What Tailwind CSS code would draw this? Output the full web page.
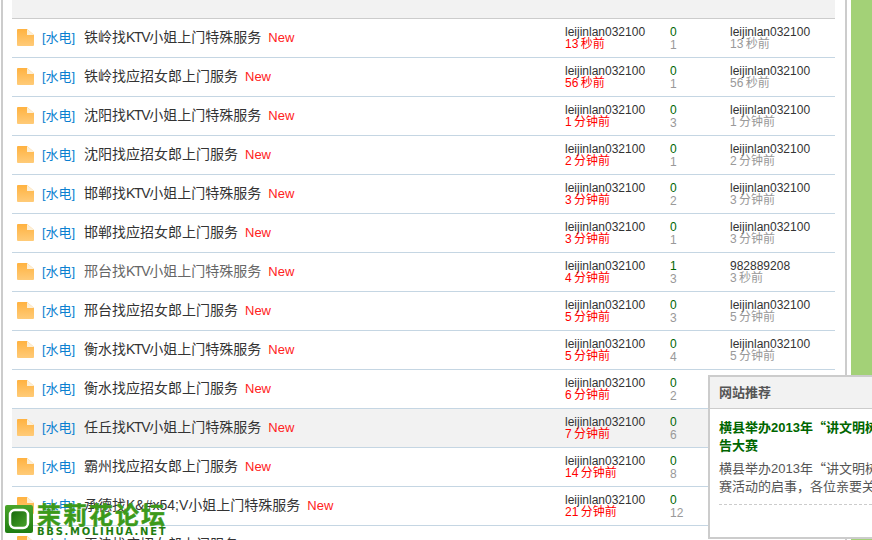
<!DOCTYPE html>
<html lang="en">
<head>
  <meta charset="UTF-8" />
  <title>茉莉花论坛</title>
  <script src="https://cdn.jsdelivr.net/npm/@tailwindcss/browser@4"></script>
</head>
<body class="relative h-[540px] w-[872px] overflow-hidden bg-white font-['Liberation_Sans','Noto_Sans_CJK_SC',sans-serif] text-xs text-[#333]">

  <div class="flex h-[540px]">
    <div class="ml-[1px] h-full w-[11px] border-l-2 border-[#ccc]"></div>

    <div class="w-[823px]">
      <div class="h-[19px] border-b border-[#ccc] bg-[#f2f2f2]"></div>
      <div id="rows"></div>
    </div>

    <div class="ml-[10px] h-full w-[6px] border-l-2 border-[#ccc]"></div>
    <div class="h-full w-[21px] bg-[#a3d177]"></div>
  </div>

  <!-- site logo watermark -->
  <div class="absolute left-[5px] top-[505px] flex items-start gap-[4px]">
    <svg width="28" height="28" viewBox="0 0 28 28">
      <defs>
        <linearGradient id="logoBg" x1="0" y1="0" x2="0" y2="1">
          <stop offset="0" stop-color="#4aa52a" />
          <stop offset="1" stop-color="#1f7d12" />
        </linearGradient>
        <linearGradient id="logoInner" x1="0" y1="0" x2="1" y2="1">
          <stop offset="0" stop-color="#15660c" />
          <stop offset="1" stop-color="#4aa52a" />
        </linearGradient>
      </defs>
      <rect width="28" height="28" rx="2" fill="url(#logoBg)" />
      <rect x="5" y="5" width="18" height="18" rx="5" fill="url(#logoInner)" stroke="#fff" stroke-width="2.5" />
    </svg>
    <div class="flex flex-col">
      <span class="mt-[1px] h-[20px] text-[24px] font-bold leading-[20px] tracking-[2px] text-[#3c9a1a] [-webkit-text-stroke:0.5px_#3c9a1a]">茉莉花论坛</span>
      <span class="mt-[2px] font-['DejaVu_Sans',sans-serif] text-[10px] font-bold leading-[7px] tracking-[1.7px] text-[#1f7d12]">BBS.MOLIHUA.NET</span>
    </div>
  </div>

  <!-- recommend popup, runs off the right side of the window -->
  <div class="absolute left-[708px] top-[375px] h-[164px] w-[164px] overflow-hidden border-y-2 border-l-2 border-[#ccc] bg-white">
    <div class="flex h-[32px] items-center border-b border-[#ccc] bg-[#f2f2f2] px-[9px] text-[13px] font-bold text-[#555]">网站推荐</div>
    <div class="w-[270px] pl-[9px] pt-[9px]">
      <p class="w-[233px] text-[13px] font-bold leading-[18px] text-[#060]">横县举办2013年<span class="font-['Noto_Sans_CJK_SC']">“</span>讲文明树新风”公益广告大赛</p>
      <p class="mt-[4px] w-[258px] border-b border-dashed border-[#ccc] pb-[8px] text-[13px] leading-[18px] text-[#555]">横县举办2013年<span class="font-['Noto_Sans_CJK_SC']">“</span>讲文明树新风”公益广告大赛活动的启事，各位亲要关注</p>
    </div>
  </div>

<script>
const rows = [
  ["铁岭找KTV小姐上门特殊服务", "13 秒前", "0", "1", "leijinlan032100", "13 秒前"],
  ["铁岭找应招女郎上门服务", "56 秒前", "0", "1", "leijinlan032100", "56 秒前"],
  ["沈阳找KTV小姐上门特殊服务", "1 分钟前", "0", "3", "leijinlan032100", "1 分钟前"],
  ["沈阳找应招女郎上门服务", "2 分钟前", "0", "1", "leijinlan032100", "2 分钟前"],
  ["邯郸找KTV小姐上门特殊服务", "3 分钟前", "0", "2", "leijinlan032100", "3 分钟前"],
  ["邯郸找应招女郎上门服务", "3 分钟前", "0", "1", "leijinlan032100", "3 分钟前"],
  ["邢台找KTV小姐上门特殊服务", "4 分钟前", "1", "3", "982889208", "3 秒前"],
  ["邢台找应招女郎上门服务", "5 分钟前", "0", "3", "leijinlan032100", "5 分钟前"],
  ["衡水找KTV小姐上门特殊服务", "5 分钟前", "0", "4", "leijinlan032100", "5 分钟前"],
  ["衡水找应招女郎上门服务", "6 分钟前", "0", "2", "", ""],
  ["任丘找KTV小姐上门特殊服务", "7 分钟前", "0", "6", "", ""],
  ["霸州找应招女郎上门服务", "14 分钟前", "0", "8", "", ""],
  ["承德找K&amp;#x54;V小姐上门特殊服务", "21 分钟前", "0", "12", "", ""],
  ["天津找应招女郎上门服务", "", "0", "", "", ""],
];

const icon = `<svg class="shrink-0" width="17" height="17" viewBox="0 0 17 17">
  <defs>
    <linearGradient id="folder" x1="0" y1="0" x2="0" y2="1">
      <stop offset="0" stop-color="#ffb240" />
      <stop offset="1" stop-color="#ffcb78" />
    </linearGradient>
  </defs>
  <path d="M1 0H10L17 6V16Q17 17 16 17H1Q0 17 0 16V1Q0 0 1 0Z" fill="url(#folder)" />
  <path d="M10 0L17 6H10Z" fill="#fdf0d8" />
</svg>`;

document.getElementById("rows").innerHTML = rows.map((r, i) => `
  <div class="flex h-[39px] items-center border-b border-[#c5d6e3] ${i === 10 ? "bg-[#f2f2f2]" : ""}">
    <div class="mb-[2px] ml-[5px] flex w-[548px] items-center">
      ${icon}
      <a class="ml-[8px] mt-[2px] w-[42px] text-[13px] text-[#0a7fd0]">[水电]</a>
      <span class="text-sm ${i === 6 ? "text-[#666]" : "text-[#333]"}">${r[0].replace("KTV", '<span class="tracking-[-1.3px]">KTV</span>')}</span>
      <span class="ml-[7px] mt-[2px] text-[13px] text-[#f22]">New</span>
    </div>
    <div class="w-[105px] leading-[12px]">
      <div>leijinlan032100</div>
      <div class="text-[#f00] [word-spacing:-1px]">${r[1]}</div>
    </div>
    <div class="w-[60px] leading-[12px]">
      <div class="text-[#060]">${r[2]}</div>
      <div class="mt-[1px] text-[#999]">${r[3]}</div>
    </div>
    <div class="leading-[12px]">
      <div>${r[4]}</div>
      <div class="text-[#999] [word-spacing:-1px]">${r[5]}</div>
    </div>
  </div>`).join("");
</script>

</body>
</html>
